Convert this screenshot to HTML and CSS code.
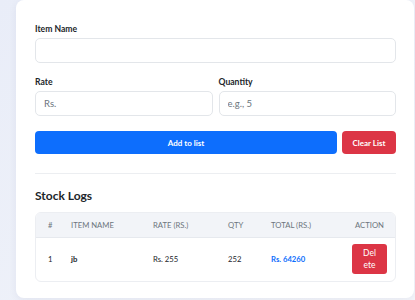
FILE: index.html
```html
<!DOCTYPE html>
<html>
<head>
<meta charset="utf-8">
<link rel="stylesheet" href="styles.css">
</head>
<body>
<div class="page">
  <div class="card">
    <div class="field">
      <label class="label">Item Name</label>
      <input class="input" type="text">
    </div>
    <div class="row2">
      <div class="field">
        <label class="label">Rate</label>
        <input class="input" type="text" placeholder="Rs.">
      </div>
      <div class="field">
        <label class="label">Quantity</label>
        <input class="input" type="text" placeholder="e.g., 5">
      </div>
    </div>
    <div class="actions">
      <button class="btn btn-primary">Add to list</button>
      <button class="btn btn-danger">Clear List</button>
    </div>
    <hr class="divider">
    <h2 class="title">Stock Logs</h2>
    <div class="table-wrap">
      <table class="table">
        <thead>
          <tr>
            <th class="c-num">#</th>
            <th class="c-name">Item Name</th>
            <th class="c-rate">Rate (Rs.)</th>
            <th class="c-qty">Qty</th>
            <th class="c-total">Total (Rs.)</th>
            <th class="c-act">Action</th>
          </tr>
        </thead>
        <tbody>
          <tr>
            <td class="c-num">1</td>
            <td class="c-name name">jb</td>
            <td class="c-rate">Rs. 255</td>
            <td class="c-qty">252</td>
            <td class="c-total total">Rs. 64260</td>
            <td class="c-act"><button class="del">Delete</button></td>
          </tr>
        </tbody>
      </table>
    </div>
  </div>
</div>
</body>
</html>
```
FILE: styles.css
```css
* { box-sizing: border-box; }
html, body { margin: 0; padding: 0; }
body {
  font-family: Lato, "Noto Sans", sans-serif;
  background: linear-gradient(135deg, #e9edf8, #f3f5fa);
  color: #212529;
  width: 415px;
  height: 300px;
  overflow: hidden;
}
.page { padding: 0 1px 0 16px; }
.card {
  background: #fff;
  border-radius: 8px;
  padding: 24px 18px 16px 19px;
  box-shadow: 0 2px 8px rgba(30, 40, 80, 0.06);
}
.field { display: flex; flex-direction: column; }
.label {
  font-size: 8.6px;
  font-weight: 700;
  color: #212529;
  margin-bottom: 3px;
  line-height: 11px;
}
.input {
  height: 25px;
  border: 1px solid #e3e6ea;
  border-radius: 5px;
  padding: 0 8px;
  font-family: inherit;
  font-size: 9.5px;
  color: #212529;
}
.input::placeholder { color: #6c757d; }
.row2 {
  display: grid;
  grid-template-columns: 1fr 1fr;
  gap: 6px;
  margin-top: 14px;
}
.actions {
  display: flex;
  gap: 5px;
  margin-top: 15px;
}
.btn {
  height: 23px;
  border: none;
  border-radius: 4px;
  color: #fff;
  font-family: inherit;
  font-size: 8px;
  font-weight: 700;
}
.btn-primary { flex: 1; background: #0d6efd; }
.btn-danger { width: 54px; background: #dc3545; }
.divider {
  border: none;
  border-top: 1px solid #eceef1;
  margin: 19px 0 0;
}
.title {
  margin: 14px 0 0;
  font-size: 12px;
  font-weight: 700;
  line-height: 15px;
}
.table-wrap {
  margin-top: 9px;
  border: 1px solid #eceef2;
  border-radius: 6px;
  overflow: hidden;
}
.table {
  width: 100%;
  border-collapse: collapse;
  font-size: 7.7px;
}
.table th {
  background: #f2f4f8;
  color: #6c757d;
  font-weight: 400;
  text-transform: uppercase;
  height: 24px;
  text-align: left;
  border-bottom: 1px solid #e6e9ee;
  padding: 0;
}
.table td {
  height: 44px;
  text-align: left;
  color: #212529;
  padding: 0;
}
.table .c-num { width: 35px; padding-left: 12px; }
.c-name { width: 82px; }
.c-rate { width: 75px; }
.c-qty { width: 43px; }
.c-total { width: 78px; }
.table .c-act { text-align: center; padding-right: 5px; }
.table td.name { font-weight: 700; color: #212529; }
.table td.total { color: #0d6efd; font-weight: 700; }
.del {
  width: 35px;
  height: 30px;
  background: #dc3545;
  border: none;
  border-radius: 3px;
  color: #fff;
  font-family: inherit;
  font-size: 8.5px;
  line-height: 12px;
  padding: 2px 10px;
  word-break: break-all;
  vertical-align: middle;
}
```
